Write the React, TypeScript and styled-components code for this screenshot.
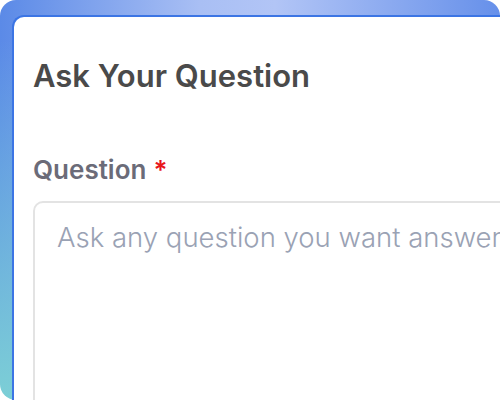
import React from 'react';
import styled, { createGlobalStyle } from 'styled-components';

const GlobalStyle = createGlobalStyle`
  html, body {
    margin: 0;
    padding: 0;
    background: #ffffff;
    overflow: hidden;
  }

  body {
    font-family: Inter, "Noto Sans", sans-serif;
  }
`;

const Frame = styled.div`
  box-sizing: border-box;
  width: 500px;
  height: 400px;
  padding: 15px 0 0 12px;
  border-radius: 16px;
  background:
    linear-gradient(180deg, rgba(124, 207, 214, 0) 10%, rgba(124, 207, 214, 1) 100%),
    linear-gradient(90deg, #5b8ae7 0%, #a9bff4 40%, #b2c5f6 55%, #6690ea 100%);
`;

const Card = styled.section`
  box-sizing: border-box;
  width: 488px;
  height: 385px;
  padding: 40px 0 0 19px;
  background: #ffffff;
  border-top: 2px solid #3c75e4;
  border-left: 2px solid #3c75e4;
  border-top-left-radius: 12px;
  overflow: hidden;
`;

const Title = styled.h1`
  margin: 0;
  font-size: 31px;
  line-height: 1.2;
  font-weight: 600;
  color: #4a4a4a;
  white-space: nowrap;
`;

const Field = styled.div`
  display: flex;
  flex-direction: column;
  gap: 16px;
  margin-top: 60px;
`;

const Label = styled.label`
  font-size: 26px;
  line-height: 1.2;
  font-weight: 600;
  color: #6b6b78;
`;

const Required = styled.span`
  color: #e8151b;
  margin-left: 7px;
`;

const TextArea = styled.textarea`
  box-sizing: border-box;
  width: 520px;
  height: 240px;
  padding: 18px 22px;
  border: 2px solid #e3e3e3;
  border-radius: 10px;
  resize: none;
  outline: none;
  font-family: inherit;
  font-size: 27.5px;
  line-height: 1.2;
  font-weight: 300;
  color: #333;
  white-space: nowrap;

  &::placeholder {
    color: #9aa2b4;
  }
`;

export default function App() {
  const id = React.useId();

  return (
    <>
      <GlobalStyle />
      <Frame>
        <Card>
          <Title>Ask Your Question</Title>
          <Field>
            <Label htmlFor={id}>
              Question<Required>*</Required>
            </Label>
            <TextArea id={id} placeholder="Ask any question you want answered" />
          </Field>
        </Card>
      </Frame>
    </>
  );
}
